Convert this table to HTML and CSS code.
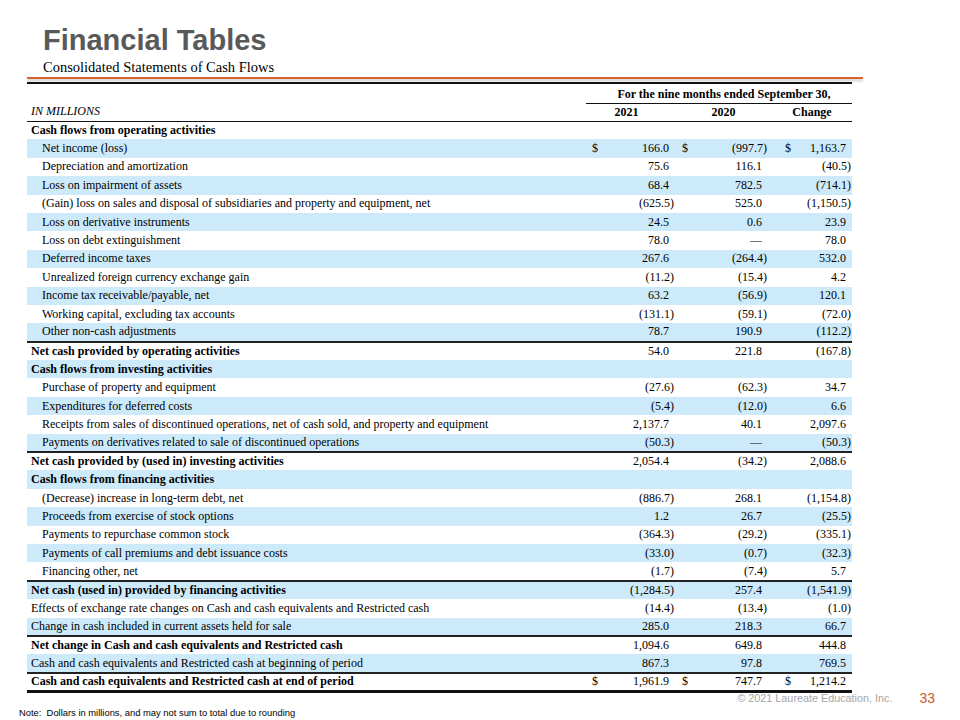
FILE: index.html
```html
<!DOCTYPE html>
<html lang="en">
<head>
    <meta charset="UTF-8">
    <meta name="viewport" content="width=device-width, initial-scale=1.0">
    <title>Financial Tables - Cash Flows</title>
    <link rel="stylesheet" href="styles.css">
</head>
<body>
    <div class="slide">
        <div class="header">
            <h1>Financial Tables</h1>
            <p class="subtitle">Consolidated Statements of Cash Flows</p>
        </div>
        <div class="accent"></div>

        <table class="cf">
            <colgroup>
                <col class="c-label">
                <col class="c-d1"><col class="c-v1">
                <col class="c-d2"><col class="c-v2">
                <col class="c-d3"><col class="c-v3">
            </colgroup>
            <thead>
                <tr class="period">
                    <th></th>
                    <th colspan="6" class="period-title">For the nine months ended September 30,</th>
                </tr>
                <tr class="years">
                    <th class="units">IN MILLIONS</th>
                    <th colspan="2" class="y1">2021</th>
                    <th colspan="2" class="y2">2020</th>
                    <th colspan="2" class="y3">Change</th>
                </tr>
            </thead>
            <tbody>
                <tr class="head"><td>Cash flows from operating activities</td><td></td><td></td><td></td><td></td><td></td><td></td></tr>
                <tr class="blue item"><td>Net income (loss)</td><td class="d">$</td><td class="n">166.0</td><td class="d">$</td><td class="n p">(997.7)</td><td class="d">$</td><td class="n">1,163.7</td></tr>
                <tr class="item"><td>Depreciation and amortization</td><td></td><td class="n">75.6</td><td></td><td class="n">116.1</td><td></td><td class="n p">(40.5)</td></tr>
                <tr class="blue item"><td>Loss on impairment of assets</td><td></td><td class="n">68.4</td><td></td><td class="n">782.5</td><td></td><td class="n p">(714.1)</td></tr>
                <tr class="item"><td>(Gain) loss on sales and disposal of subsidiaries and property and equipment, net</td><td></td><td class="n p">(625.5)</td><td></td><td class="n">525.0</td><td></td><td class="n p">(1,150.5)</td></tr>
                <tr class="blue item"><td>Loss on derivative instruments</td><td></td><td class="n">24.5</td><td></td><td class="n">0.6</td><td></td><td class="n">23.9</td></tr>
                <tr class="item"><td>Loss on debt extinguishment</td><td></td><td class="n">78.0</td><td></td><td class="n">—</td><td></td><td class="n">78.0</td></tr>
                <tr class="blue item"><td>Deferred income taxes</td><td></td><td class="n">267.6</td><td></td><td class="n p">(264.4)</td><td></td><td class="n">532.0</td></tr>
                <tr class="item"><td>Unrealized foreign currency exchange gain</td><td></td><td class="n p">(11.2)</td><td></td><td class="n p">(15.4)</td><td></td><td class="n">4.2</td></tr>
                <tr class="blue item"><td>Income tax receivable/payable, net</td><td></td><td class="n">63.2</td><td></td><td class="n p">(56.9)</td><td></td><td class="n">120.1</td></tr>
                <tr class="item"><td>Working capital, excluding tax accounts</td><td></td><td class="n p">(131.1)</td><td></td><td class="n p">(59.1)</td><td></td><td class="n p">(72.0)</td></tr>
                <tr class="blue item"><td>Other non-cash adjustments</td><td></td><td class="n">78.7</td><td></td><td class="n">190.9</td><td></td><td class="n p">(112.2)</td></tr>
                <tr class="total"><td>Net cash provided by operating activities</td><td></td><td class="n">54.0</td><td></td><td class="n">221.8</td><td></td><td class="n p">(167.8)</td></tr>

                <tr class="blue head"><td>Cash flows from investing activities</td><td></td><td></td><td></td><td></td><td></td><td></td></tr>
                <tr class="item"><td>Purchase of property and equipment</td><td></td><td class="n p">(27.6)</td><td></td><td class="n p">(62.3)</td><td></td><td class="n">34.7</td></tr>
                <tr class="blue item"><td>Expenditures for deferred costs</td><td></td><td class="n p">(5.4)</td><td></td><td class="n p">(12.0)</td><td></td><td class="n">6.6</td></tr>
                <tr class="item"><td>Receipts from sales of discontinued operations, net of cash sold, and property and equipment</td><td></td><td class="n">2,137.7</td><td></td><td class="n">40.1</td><td></td><td class="n">2,097.6</td></tr>
                <tr class="blue item"><td>Payments on derivatives related to sale of discontinued operations</td><td></td><td class="n p">(50.3)</td><td></td><td class="n">—</td><td></td><td class="n p">(50.3)</td></tr>
                <tr class="total"><td>Net cash provided by (used in) investing activities</td><td></td><td class="n">2,054.4</td><td></td><td class="n p">(34.2)</td><td></td><td class="n">2,088.6</td></tr>

                <tr class="blue head"><td>Cash flows from financing activities</td><td></td><td></td><td></td><td></td><td></td><td></td></tr>
                <tr class="item"><td>(Decrease) increase in long-term debt, net</td><td></td><td class="n p">(886.7)</td><td></td><td class="n">268.1</td><td></td><td class="n p">(1,154.8)</td></tr>
                <tr class="blue item"><td>Proceeds from exercise of stock options</td><td></td><td class="n">1.2</td><td></td><td class="n">26.7</td><td></td><td class="n p">(25.5)</td></tr>
                <tr class="item"><td>Payments to repurchase common stock</td><td></td><td class="n p">(364.3)</td><td></td><td class="n p">(29.2)</td><td></td><td class="n p">(335.1)</td></tr>
                <tr class="blue item"><td>Payments of call premiums and debt issuance costs</td><td></td><td class="n p">(33.0)</td><td></td><td class="n p">(0.7)</td><td></td><td class="n p">(32.3)</td></tr>
                <tr class="item"><td>Financing other, net</td><td></td><td class="n p">(1.7)</td><td></td><td class="n p">(7.4)</td><td></td><td class="n">5.7</td></tr>
                <tr class="blue total"><td>Net cash (used in) provided by financing activities</td><td></td><td class="n p">(1,284.5)</td><td></td><td class="n">257.4</td><td></td><td class="n p">(1,541.9)</td></tr>

                <tr class="plain"><td>Effects of exchange rate changes on Cash and cash equivalents and Restricted cash</td><td></td><td class="n p">(14.4)</td><td></td><td class="n p">(13.4)</td><td></td><td class="n p">(1.0)</td></tr>
                <tr class="blue plain"><td>Change in cash included in current assets held for sale</td><td></td><td class="n">285.0</td><td></td><td class="n">218.3</td><td></td><td class="n">66.7</td></tr>
                <tr class="total"><td>Net change in Cash and cash equivalents and Restricted cash</td><td></td><td class="n">1,094.6</td><td></td><td class="n">649.8</td><td></td><td class="n">444.8</td></tr>
                <tr class="blue plain"><td>Cash and cash equivalents and Restricted cash at beginning of period</td><td></td><td class="n">867.3</td><td></td><td class="n">97.8</td><td></td><td class="n">769.5</td></tr>
                <tr class="total final"><td>Cash and cash equivalents and Restricted cash at end of period</td><td class="d">$</td><td class="n">1,961.9</td><td class="d">$</td><td class="n">747.7</td><td class="d">$</td><td class="n">1,214.2</td></tr>
            </tbody>
        </table>

        <div class="footer">
            <span class="copyright">© 2021 Laureate Education, Inc.</span>
            <span class="page-num">33</span>
        </div>
        <p class="note">Note:&nbsp; Dollars in millions, and may not sum to total due to rounding</p>
    </div>
</body>
</html>
```

FILE: styles.css
```css
* { margin: 0; padding: 0; box-sizing: border-box; }
body { background: #fff; font-family: "Liberation Serif", "Times New Roman", serif; color: #000; }
.slide { width: 960px; height: 720px; overflow: hidden; }

.header { padding: 22px 0 0 43px; }
.header h1 { font-family: "Liberation Sans", Arial, sans-serif; font-size: 29px; line-height: 36px; font-weight: bold; color: #595959; }
.subtitle { margin-top: 1px; font-size: 14.5px; line-height: 17px; }
.accent { margin: 1px 0 0 27px; width: 836px; height: 2px; background: #d9642f; box-shadow: 0 2px 3px rgba(0,0,0,0.25); }

.cf { margin: 3px 0 0 27px; width: 825px; table-layout: fixed; border-collapse: collapse; font-size: 12px; border-top: 2px solid #111; }
.c-label { width: 559px; }
.c-d1 { width: 20px; } .c-v1 { width: 71px; }
.c-d2 { width: 22px; } .c-v2 { width: 71px; }
.c-d3 { width: 26px; } .c-v3 { width: 56px; }

.cf th { font-weight: bold; white-space: nowrap; }
.period { height: 20px; }
.period-title { text-align: center; border-bottom: 1px solid #111; padding: 3px 0 0 10px; }
.years { height: 18px; border-bottom: 1.5px solid #111; }
.years th { text-align: center; }
.years .units { text-align: left; font-weight: normal; font-style: italic; padding-left: 4px; }
.years .y1 { padding-right: 10px; }
.years .y3 { padding-left: 2px; }

.cf tbody tr { height: 18.4px; }
.cf td { white-space: nowrap; vertical-align: middle; padding: 0; }
.cf td:first-child { padding-left: 4px; }
.cf tr.item td:first-child { padding-left: 15px; }
.cf tr.head td:first-child, .cf tr.total td:first-child { font-weight: bold; }
.blue { background: #cdeafb; }
.total { border-top: 2px solid #222; }
.final { border-bottom: 3px solid #111; }

.cf td.d { text-align: left; }
.cf td.d:nth-child(2) { padding-left: 6px; }
.cf td.d:nth-child(4) { padding-left: 5px; }
.cf td.d:nth-child(6) { padding-left: 15px; }
.cf td.n { text-align: right; padding-right: 8px; }
.cf td.n.p { padding-right: 3px; }
.cf td.n:last-child { padding-right: 6px; }
.cf td.n.p:last-child { padding-right: 1px; }

.footer { display: flex; justify-content: flex-end; align-items: center; gap: 27px; padding-right: 25px; margin-top: -2px; height: 15px; font-family: "Liberation Sans", Arial, sans-serif; }
.copyright { font-size: 10.8px; color: #a6a6a6; }
.page-num { font-size: 14px; color: #d0582a; }
.note { margin-top: 1px; padding-left: 19px; font-family: "Liberation Sans", Arial, sans-serif; font-size: 9.4px; line-height: 12px; }
```
